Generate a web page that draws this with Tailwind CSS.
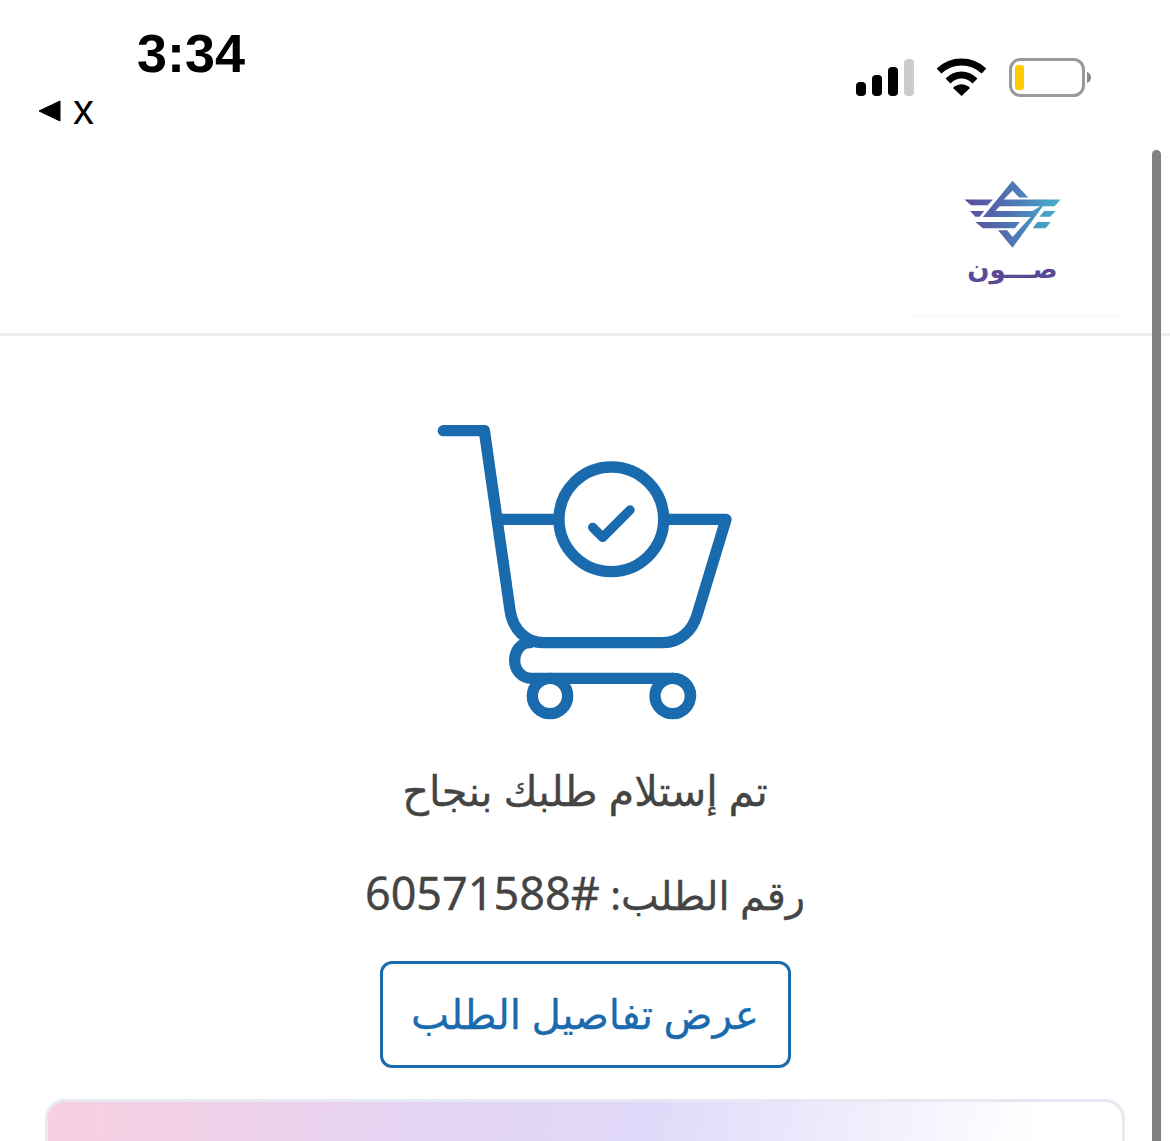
<!DOCTYPE html>
<html lang="ar">
<head>
    <meta charset="UTF-8">
    <meta name="viewport" content="width=device-width, initial-scale=1.0">
    <title>تم إستلام طلبك</title>
    <script src="https://cdn.jsdelivr.net/npm/@tailwindcss/browser@4"></script>
</head>
<body class="bg-white h-[1141px] overflow-hidden relative font-['Noto_Sans','DejaVu_Sans',sans-serif]">
    <!-- Status bar -->
    <div class="h-[140px] flex justify-between">
        <div class="pl-[38px] pt-[24px]">
            <div class="pl-[99px] text-[54px] leading-[58px] font-bold text-black font-['Liberation_Sans',sans-serif]">3:34</div>
            <div class="flex items-center gap-[12px] h-[40px] mt-[8px]">
                <svg class="w-[23px] h-[22px] mt-[2px]" viewBox="0 0 23 22"><path d="M22 1v20L1 11z" fill="#000" stroke="#000" stroke-linejoin="round"/></svg>
                <span class="text-[42px] leading-[36px] text-black font-['Liberation_Sans',sans-serif]">x</span>
            </div>
        </div>
        <div class="flex items-start gap-[22px] pt-[58px] pr-[79px]">
            <svg class="w-[58px] h-[38px]" viewBox="0 0 58 38">
                <rect x="0" y="24" width="10" height="14" rx="4" fill="#000"/>
                <rect x="16" y="17" width="10" height="21" rx="4" fill="#000"/>
                <rect x="32" y="9" width="10" height="29" rx="4" fill="#000"/>
                <rect x="48" y="1" width="10" height="37" rx="4" fill="#ccc"/>
            </svg>
            <svg class="w-[51px] h-[38px]" viewBox="0 0 51 38">
                <path d="M3 13C16 1 35 1 48 13" fill="none" stroke="#000" stroke-width="7"/>
                <path d="M12 23C20 15 31 15 39 23" fill="none" stroke="#000" stroke-width="7"/>
                <path d="M17 30C22 25 29 25 34 30L25.500 38z" fill="#000"/>
            </svg>
            <svg class="w-[82px] h-[39px]" viewBox="0 0 82 39">
                <rect x="1.500" y="1.500" width="73" height="36" rx="10" fill="none" stroke="#999" stroke-width="3"/>
                <rect x="6" y="7" width="9" height="25" rx="3" fill="#fc0"/>
                <path d="M78 14c3 1 4 3 4 5.500s-1 4.500-4 5.500z" fill="#888"/>
            </svg>
        </div>
    </div>

    <!-- Header with logo -->
    <header class="h-[196px] border-b-[3px] border-[#eeeeee] flex justify-end pr-[45px]">
        <div class="w-[215px] h-[177px] border-b border-[#f8f8f8] flex flex-col items-center pt-[40px] pr-[10px]">
            <svg class="w-[97px] h-[68px] shrink-0" viewBox="195 45 286 202">
                <defs>
                    <linearGradient id="logoGrad" gradientUnits="userSpaceOnUse" x1="195" y1="0" x2="481" y2="0">
                        <stop offset="0" stop-color="#5a4a9c"/>
                        <stop offset="0.5" stop-color="#4f76b4"/>
                        <stop offset="1" stop-color="#43b4cc"/>
                    </linearGradient>
                </defs>
                <g fill="url(#logoGrad)">
                    <path d="M338 47L385 97H358L338 76L312 103H481L463 123H300L287 137H398L420 123H428L338 246L295 194H322L338 214L392 155H250z"/>
                    <path d="M195 103H280L264 120H215z"/>
                    <path d="M212 137H254L240 154H228z"/>
                    <path d="M228 170H360L345 188H250z"/>
                    <path d="M432 137H466L450 154H418z"/>
                    <path d="M412 170H452L436 188H398z"/>
                </g>
            </svg>
            <span dir="rtl" class="text-[26px] leading-[36px] font-bold text-[#5a4a96] font-['DejaVu_Sans',sans-serif] mt-[3px]">صـــون</span>
        </div>
    </header>

    <!-- Success content -->
    <main class="flex flex-col items-center pt-[74px]">
        <svg class="w-[330px] h-[320px] shrink-0" viewBox="0 0 990 960" fill="none" stroke="#1a6bad" stroke-width="34" stroke-linecap="round" stroke-linejoin="round">
            <path d="M70 62H193L270 600C278 660 320 698 370 698H730C780 698 818 662 832 612L918 328H745"/>
            <path d="M235 328H405"/>
            <circle cx="574" cy="328" r="157"/>
            <path d="M518 352L548 382L630 300" stroke-width="28"/>
            <path d="M330 698C300 698 284 725 284 752C284 780 305 805 335 805H760C790 805 812 830 812 858"/>
            <circle cx="390" cy="858" r="53"/>
            <circle cx="758" cy="858" r="53"/>
        </svg>
        <p dir="rtl" class="mt-[30px] text-[41.5px] leading-[60px] text-[#444444] [-webkit-text-stroke:0.3px_#444444]">تم إستلام طلبك بنجاح</p>
        <p dir="rtl" class="mt-[43px] text-[40px] leading-[60px] text-[#444444] [-webkit-text-stroke:0.3px_#444444]">رقم الطلب: <span class="text-[45px] leading-[60px] [letter-spacing:1px]">#60571588</span></p>
        <button dir="rtl" class="mt-[36px] w-[411px] h-[107px] border-[3px] border-[#1a6bad] rounded-[12px] text-[40.5px] text-[#1a6bad] [-webkit-text-stroke:0.3px_#1a6bad]">عرض تفاصيل الطلب</button>
        <div class="mt-[31px] w-[1080px] h-[200px] shrink-0 rounded-[20px] border-[3px] border-[#e6e8f2] bg-linear-[100deg,#f9cfe0_0%,#e4d4f4_35%,#e0d9f9_55%,#f5f2fd_78%,#ffffff_90%]"></div>
    </main>

    <!-- Scrollbar -->
    <div class="absolute top-[150px] right-[9px] bottom-0 w-[9px] rounded-t-full bg-[#808080]"></div>
</body>
</html>
